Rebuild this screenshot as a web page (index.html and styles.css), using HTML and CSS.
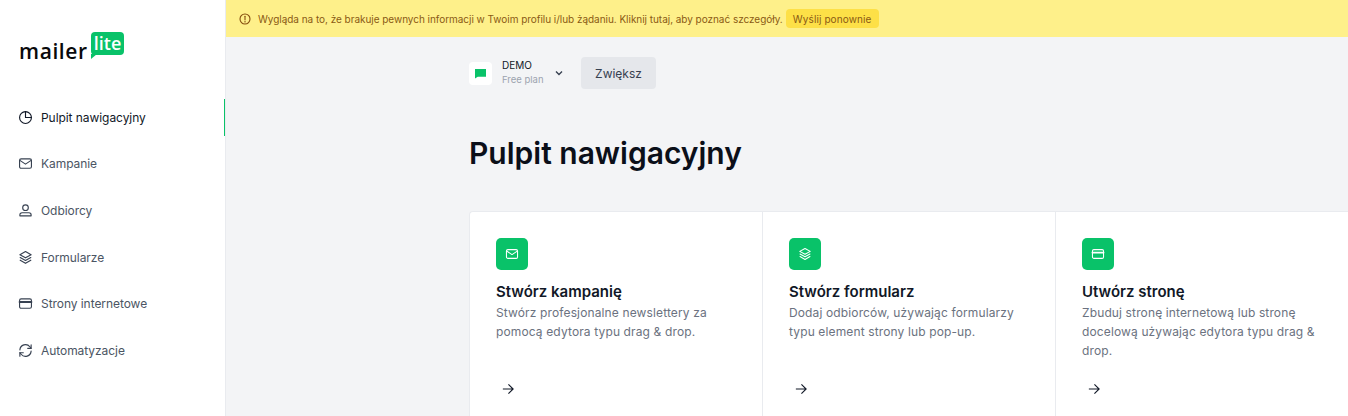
FILE: index.html
```html
<!DOCTYPE html>
<html lang="pl">
<head>
    <meta charset="UTF-8">
    <meta name="viewport" content="width=device-width, initial-scale=1.0">
    <title>MailerLite - Pulpit nawigacyjny</title>
    <link rel="stylesheet" href="styles.css">
</head>
<body>
    <div class="app">
        <!-- Sidebar -->
        <aside class="sidebar">
            <div class="logo">
                <span class="logo-word">mailer</span>
                <span class="logo-bubble">lite</span>
            </div>
            <nav class="nav">
                <a class="nav-item active">
                    <svg class="nav-icon" viewBox="0 0 24 24"><circle cx="12" cy="12" r="9.500"/><path d="M12 2.500V12H21.500"/></svg>
                    Pulpit nawigacyjny
                </a>
                <a class="nav-item">
                    <svg class="nav-icon" viewBox="0 0 24 24"><rect x="2.500" y="4.500" width="19" height="15" rx="2.500"/><path d="M3 7l9 6 9-6"/></svg>
                    Kampanie
                </a>
                <a class="nav-item">
                    <svg class="nav-icon" viewBox="0 0 24 24"><circle cx="12" cy="7.500" r="4.500"/><path d="M3 20.500v-1.500a3.500 3.500 0 0 1 3.500-3.500h11a3.500 3.500 0 0 1 3.500 3.500v1.500z"/></svg>
                    Odbiorcy
                </a>
                <a class="nav-item">
                    <svg class="nav-icon" viewBox="0 0 24 24"><path d="M12 2.500l9 5-9 5-9-5z"/><path d="M3.500 12l8.500 4.700 8.500-4.700"/><path d="M3.500 16.300l8.500 5 8.500-5"/></svg>
                    Formularze
                </a>
                <a class="nav-item">
                    <svg class="nav-icon" viewBox="0 0 24 24"><rect x="2.500" y="4.500" width="19" height="15" rx="2.500"/><path d="M2.500 9.500h19" stroke-width="3"/></svg>
                    Strony internetowe
                </a>
                <a class="nav-item">
                    <svg class="nav-icon" viewBox="0 0 24 24"><path d="M3 11a9 9 0 0 1 16-5l2 2.500"/><path d="M21 3v5.500h-5.500"/><path d="M21 13a9 9 0 0 1-16 5l-2-2.500"/><path d="M3 21v-5.500h5.500"/></svg>
                    Automatyzacje
                </a>
            </nav>
        </aside>

        <div class="main">
            <!-- Warning banner -->
            <div class="banner">
                <svg class="banner-icon" viewBox="0 0 24 24"><circle cx="12" cy="12" r="10"/><path d="M12 6.500v7"/><path d="M12 16.500v1.500"/></svg>
                <span>Wygląda na to, że brakuje pewnych informacji w Twoim profilu i/lub żądaniu. Kliknij tutaj, aby poznać szczegóły.</span>
                <button class="banner-btn">Wyślij ponownie</button>
            </div>

            <div class="content">
                <div class="account-row">
                    <div class="account-tile">
                        <svg viewBox="0 0 12 12" class="account-flag"><path d="M0 1h12v8.500H3L0 11.500z"/></svg>
                    </div>
                    <div class="account-text">
                        <div class="account-name">DEMO</div>
                        <div class="account-plan">Free plan</div>
                    </div>
                    <svg class="chevron" viewBox="0 0 10 10"><path d="M2 3.500l3 3 3-3"/></svg>
                    <button class="upgrade-btn">Zwiększ</button>
                </div>

                <h1 class="page-title">Pulpit nawigacyjny</h1>

                <div class="cards">
                    <div class="card">
                        <div class="card-icon">
                            <svg viewBox="0 0 24 24"><rect x="2.500" y="4.500" width="19" height="15" rx="2.500"/><path d="M3 7l9 6 9-6"/></svg>
                        </div>
                        <h3>Stwórz kampanię</h3>
                        <p>Stwórz profesjonalne newslettery za pomocą edytora typu drag &amp; drop.</p>
                        <svg class="arrow" viewBox="0 0 14 14"><path d="M1 7h12M7.500 1.500L13 7l-5.500 5.500"/></svg>
                    </div>
                    <div class="card">
                        <div class="card-icon">
                            <svg viewBox="0 0 24 24"><path d="M12 2.500l9 5-9 5-9-5z"/><path d="M3.500 12l8.500 4.700 8.500-4.700"/><path d="M3.500 16.300l8.500 5 8.500-5"/></svg>
                        </div>
                        <h3>Stwórz formularz</h3>
                        <p>Dodaj odbiorców, używając formularzy typu element strony lub pop-up.</p>
                        <svg class="arrow" viewBox="0 0 14 14"><path d="M1 7h12M7.500 1.500L13 7l-5.500 5.500"/></svg>
                    </div>
                    <div class="card">
                        <div class="card-icon">
                            <svg viewBox="0 0 24 24"><rect x="2.500" y="4.500" width="19" height="15" rx="2.500"/><path d="M2.500 9.500h19" stroke-width="3"/></svg>
                        </div>
                        <h3>Utwórz stronę</h3>
                        <p>Zbuduj stronę internetową lub stronę docelową używając edytora typu drag &amp; drop.</p>
                        <svg class="arrow" viewBox="0 0 14 14"><path d="M1 7h12M7.500 1.500L13 7l-5.500 5.500"/></svg>
                    </div>
                </div>
            </div>
        </div>
    </div>
</body>
</html>
```
FILE: styles.css
```css
* {
    box-sizing: border-box;
}
html, body {
    margin: 0;
    height: 416px;
    overflow: hidden;
}
body {
    font-family: Inter, "Liberation Sans", sans-serif;
    background-color: #f3f4f6;
    color: #111827;
}
.app {
    display: flex;
    height: 416px;
}

/* Sidebar */
.sidebar {
    width: 226px;
    flex-shrink: 0;
    background-color: #fff;
    border-right: 1px solid #e9ebef;
}
.logo {
    display: flex;
    align-items: flex-start;
    height: 99px;
    padding: 32px 0 0 19px;
}
.logo-word {
    width: 68px;
    margin-top: 7px;
    font-family: "Open Sans", sans-serif;
    font-size: 21px;
    line-height: 24px;
    font-weight: 600;
    letter-spacing: 0.6px;
    color: #09090b;
}
.logo-bubble {
    position: relative;
    margin-left: 4px;
    width: 33px;
    height: 23px;
    background-color: #09c269;
    border-radius: 4px;
    font-family: "Open Sans", sans-serif;
    font-size: 18px;
    font-weight: 600;
    line-height: 22px;
    text-align: center;
    color: #fff;
}
.logo-bubble::after {
    content: "";
    position: absolute;
    left: 0;
    top: 22px;
    border-top: 5px solid #09c269;
    border-right: 6px solid transparent;
}
.nav {
    display: flex;
    flex-direction: column;
    gap: 9.700px;
}
.nav-item {
    display: flex;
    align-items: center;
    gap: 8px;
    height: 37px;
    padding-left: 18px;
    padding-bottom: 1px;
    font-size: 12px;
    letter-spacing: -0.06px;
    color: #4b5563;
}
.nav-item.active {
    color: #111827;
    border-right: 1px solid #09c269;
}
.nav-icon {
    width: 15px;
    height: 15px;
    fill: none;
    stroke: #374151;
    stroke-width: 1.800;
    stroke-linecap: round;
    stroke-linejoin: round;
}
.nav-item.active .nav-icon {
    stroke: #111827;
}

/* Main area */
.main {
    flex: 1;
    min-width: 0;
}
.banner {
    display: flex;
    align-items: center;
    height: 37px;
    padding-left: 13px;
    background-color: #fef08a;
    font-size: 10px;
    letter-spacing: -0.035px;
    color: #8a5a14;
}
.banner-icon {
    width: 12px;
    height: 12px;
    margin-right: 7px;
    fill: none;
    stroke: #854d0e;
    stroke-width: 2.200;
    stroke-linecap: round;
}
.banner-btn {
    margin-left: 3px;
    height: 19px;
    width: 93px;
    padding: 0;
    border: none;
    border-radius: 4px;
    background-color: #fde047;
    font-family: inherit;
    font-size: 10px;
    letter-spacing: 0.1px;
    color: #8a5a14;
}
.content {
    padding-left: 243px;
}
.account-row {
    display: flex;
    align-items: center;
    height: 32px;
    margin-top: 20px;
}
.account-tile {
    display: flex;
    align-items: center;
    justify-content: center;
    width: 23px;
    height: 23px;
    background-color: #fff;
    border-radius: 4px;
}
.account-flag {
    width: 11px;
    height: 11px;
    fill: #09c269;
}
.account-text {
    margin-left: 10px;
    width: 49px;
}
.account-name {
    margin-top: -1px;
    font-size: 10px;
    line-height: 14px;
    color: #111827;
}
.account-plan {
    margin-top: 1px;
    font-size: 9.500px;
    line-height: 14px;
    color: #9ca3af;
}
.chevron {
    width: 10px;
    height: 10px;
    margin-left: 3px;
    fill: none;
    stroke: #374151;
    stroke-width: 1.400;
}
.upgrade-btn {
    width: 75px;
    height: 32px;
    margin-left: 17px;
    padding: 0;
    border: none;
    border-radius: 4px;
    background-color: #e5e7eb;
    font-family: inherit;
    font-size: 12px;
    color: #374151;
}
.page-title {
    margin: 44px 0 38px;
    font-size: 30px;
    line-height: 40px;
    font-weight: 600;
    color: #0b0f19;
}
.cards {
    display: grid;
    grid-template-columns: repeat(3, 293px);
}
.card {
    height: 220px;
    padding: 26px 26px;
    background-color: #fff;
    border-top: 1px solid #e9ebef;
    border-left: 1px solid #e9ebef;
}
.card:first-child {
    border-top-left-radius: 4px;
}
.card-icon {
    display: flex;
    align-items: center;
    justify-content: center;
    width: 32px;
    height: 32px;
    background-color: #09c269;
    border-radius: 5px;
}
.card-icon svg {
    width: 14px;
    height: 14px;
    fill: none;
    stroke: #fff;
    stroke-width: 1.800;
    stroke-linecap: round;
    stroke-linejoin: round;
}
.card h3 {
    margin: 12px 0 0;
    font-size: 15px;
    line-height: 20px;
    font-weight: 600;
    color: #111827;
}
.card p {
    margin: 1px 0 0;
    height: 58px;
    font-size: 12px;
    line-height: 19.200px;
    letter-spacing: 0.13px;
    color: #6b7280;
}
.arrow {
    display: block;
    width: 12px;
    height: 12px;
    margin-top: 22px;
    margin-left: 6px;
    fill: none;
    stroke: #111827;
    stroke-width: 1.300;
}
```
